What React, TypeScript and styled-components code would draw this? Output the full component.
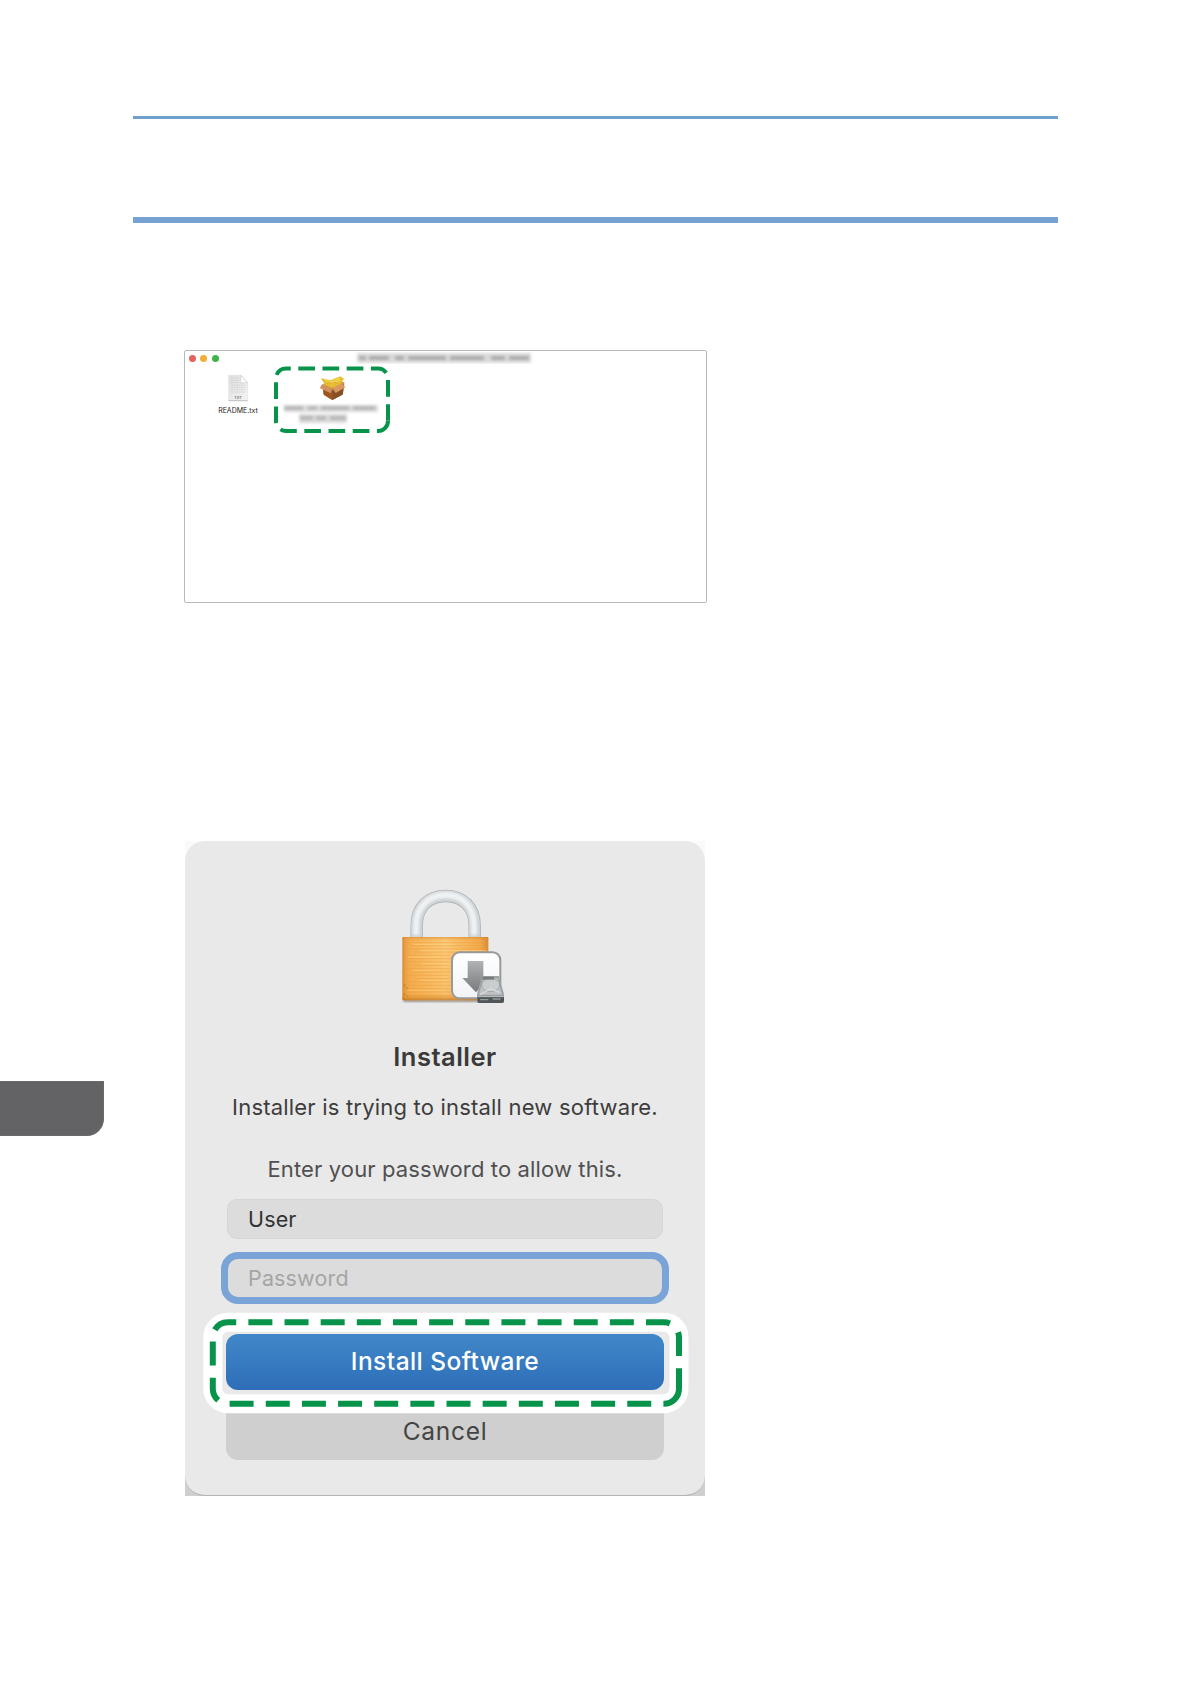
import React from "react"
import styled, { createGlobalStyle } from "styled-components"

const App: React.FC = () => {
	return (
		<Page>
			<GlobalStyle />
			<ThinRule />
			<ThickRule />
			<FinderWindow>
				<TitleBar>
					<Lights>
						<Light $color="#e2635c" />
						<Light $color="#f0ae35" />
						<Light $color="#3fb34b" />
					</Lights>
					<Smudge>
						<BlurredTitle />
					</Smudge>
				</TitleBar>
				<Files>
					<FileItem>
						<TextFileIcon />
						<FileName>README.txt</FileName>
					</FileItem>
					<PackageItem>
						<PackageIcon />
						<BlurredName />
					</PackageItem>
				</Files>
				<PackageHighlight />
			</FinderWindow>
			<Lower>
				<Gutter>
					<ChapterTab />
				</Gutter>
				<DialogFrame>
					<Dialog>
						<LockIcon />
						<Heading>Installer</Heading>
						<Message>Installer is trying to install new software.</Message>
						<Hint>Enter your password to allow this.</Hint>
						<Field>User</Field>
						<PasswordField>Password</PasswordField>
						<InstallButton>Install Software</InstallButton>
						<CancelButton>Cancel</CancelButton>
						<ButtonHighlight />
					</Dialog>
				</DialogFrame>
			</Lower>
		</Page>
	)
}

export default App

const TextFileIcon: React.FC = () => (
	<svg width="22" height="28" viewBox="0 0 66 84">
		<defs>
			<linearGradient id="paper" x1="0" y1="0" x2="1" y2="1">
				<stop offset="0" stopColor="#dedede" />
				<stop offset="1" stopColor="#f4f4f4" />
			</linearGradient>
		</defs>
		<path d="M5 4H42L62 26V80H5Z" fill="url(#paper)" stroke="#dcdcdc" strokeWidth="1.5" />
		<path d="M5 80H62" stroke="#b9b9b9" strokeWidth="2.5" />
		<path d="M42 4L39 27L62 26Z" fill="#fafafa" stroke="#bcbcbc" strokeWidth="1.5" />
		<path
			d="M12 12H34M12 19H34M12 26H34M12 33H54M12 40H54M12 47H54M12 54H54"
			stroke="#cacaca"
			strokeWidth="2"
			strokeDasharray="7 2 4 2"
		/>
		<text
			x="33"
			y="74"
			fontFamily="Inter, sans-serif"
			fontSize="12"
			fill="#444"
			textAnchor="middle"
		>
			TXT
		</text>
	</svg>
)

const PackageIcon: React.FC = () => (
	<svg width="28" height="26" viewBox="0 0 84 78">
		<path d="M10 28L42 40L74 28L72 58L40 75L13 58Z" fill="#a8672f" />
		<path d="M40 42L76 26L71 59L40 75Z" fill="#875024" />
		<path d="M14 42L40 52V75L15 60Z" fill="#9d5521" />
		<path d="M12 27L38 16L72 22L66 35L42 44Z" fill="#c99520" />
		<path d="M5 10L34 16L64 4L75 11L62 32L39 39L20 31Z" fill="#e6bd30" />
		<path d="M14 14L36 18L61 7L66 16L39 29Z" fill="#efd04c" />
		<path d="M25 26L32 22L37 27L46 22L54 25" fill="none" stroke="#cf9c1f" strokeWidth="2" />
		<path d="M9 28L40 40L35 55L2 39Z" fill="#d2925f" />
		<path d="M40 40L69 24L79 37L50 54Z" fill="#d89862" />
		<path d="M69 22L77 21L72 32Z" fill="#cb8850" />
	</svg>
)

const BlurredTitle: React.FC = () => (
	<svg width="180" height="16" viewBox="0 0 180 16">
		<g filter="url(#soft)">
			<rect x="3" y="3" width="174" height="10" fill="#dadada" />
			<path
				d="M5 8H12M15 8H35M41 8H50M54 8H92M96 8H130M137 8H151M155 8H175"
				stroke="#a9a9a9"
				strokeWidth="4"
			/>
		</g>
		<filter id="soft">
			<feGaussianBlur stdDeviation="1.4" />
		</filter>
	</svg>
)

const BlurredName: React.FC = () => (
	<svg width="102" height="24" viewBox="0 0 102 24">
		<g filter="url(#softer)">
			<rect x="5" y="4" width="94" height="7" fill="#dadada" />
			<rect x="20" y="13" width="48" height="9" fill="#dadada" />
			<path
				d="M5 7H24M29 7H38M42 7H70M74 7H96M21 17H34M37 17H47M51 17H67"
				stroke="#b2b2b2"
				strokeWidth="3.5"
			/>
		</g>
		<filter id="softer">
			<feGaussianBlur stdDeviation="1.5" />
		</filter>
	</svg>
)

const PackageHighlight: React.FC = () => (
	<Overlay $left={86} $top={12} width="122" height="74" viewBox="271 363 122 74">
		<path
			d="M388 421A10 10 0 0 1 378 431H286A10 10 0 0 1 276 421V378.500A10 10 0 0 1 286 368.500H378A10 10 0 0 1 388 378.500Z"
			fill="none"
			stroke="#07934a"
			strokeWidth="4"
			strokeDasharray="16.700 7.500"
		/>
	</Overlay>
)

const highlightPath =
	"M679 1388.700A15 15 0 0 1 664 1403.700H227.800A15 15 0 0 1 212.800 1388.700V1337.300A15 15 0 0 1 227.800 1322.300H664A15 15 0 0 1 679 1337.300Z"

const ButtonHighlight: React.FC = () => (
	<Overlay $left={15} $top={469} width="492" height="108" viewBox="200 1310 492 108">
		<path d={highlightPath} fill="none" stroke="#fff" strokeWidth="19" />
		<path
			d={highlightPath}
			fill="none"
			stroke="#07934a"
			strokeWidth="6"
			strokeDasharray="24 12.150"
		/>
	</Overlay>
)

const LockIcon: React.FC = () => (
	<svg width="150" height="135" viewBox="-60 0 450 405">
		<defs>
			<linearGradient id="brass" x1="0" y1="0" x2="1" y2="0">
				<stop offset="0" stopColor="#d58a35" />
				<stop offset="0.04" stopColor="#eda348" />
				<stop offset="0.1" stopColor="#f5b155" />
				<stop offset="0.5" stopColor="#fdcb7a" />
				<stop offset="0.9" stopColor="#f2aa4c" />
				<stop offset="1" stopColor="#d58a35" />
			</linearGradient>
			<linearGradient id="brassShade" x1="0" y1="0" x2="0" y2="1">
				<stop offset="0" stopColor="#c97920" stopOpacity="0.45" />
				<stop offset="0.07" stopColor="#f0a040" stopOpacity="0.05" />
				<stop offset="0.9" stopColor="#e88a1a" stopOpacity="0.15" />
				<stop offset="1" stopColor="#b56a18" stopOpacity="0.7" />
			</linearGradient>
			<linearGradient id="badge" x1="0" y1="0" x2="0" y2="1">
				<stop offset="0" stopColor="#ffffff" />
				<stop offset="1" stopColor="#f1f3f7" />
			</linearGradient>
			<linearGradient id="arrow" x1="0" y1="0" x2="0" y2="1">
				<stop offset="0" stopColor="#b0b2b4" />
				<stop offset="1" stopColor="#77797c" />
			</linearGradient>
			<filter id="shade">
				<feGaussianBlur stdDeviation="3" />
			</filter>
			<filter id="tube">
				<feGaussianBlur stdDeviation="5" />
			</filter>
		</defs>
		<rect x="40" y="356" width="250" height="10" fill="#9a958f" filter="url(#shade)" />
		<path
			d="M80 176V137C80 82 115 48 167 48S254 82 254 137V176"
			fill="none"
			stroke="#a9adb1"
			strokeWidth="37"
		/>
		<path
			d="M80 176V137C80 82 115 48 167 48S254 82 254 137V176"
			fill="none"
			stroke="#cbd0d3"
			strokeWidth="33"
		/>
		<path
			d="M78 166V136C78 82 115 45 167 45S252 82 252 136V166"
			fill="none"
			stroke="#f0f3f4"
			strokeWidth="19"
			filter="url(#tube)"
		/>
		<rect x="37" y="171" width="258" height="190" rx="4" fill="url(#brass)" />
		<path
			d="M48 188H285M60 197H270M42 207H289M70 216H240M44 226H180M58 236H182M42 246H178M70 256H180M45 266H180M60 276H181M42 286H176M72 296H180M48 306H179M64 316H181M44 326H178M56 336H182M46 346H182"
			stroke="#e89b3c"
			strokeWidth="2.5"
			strokeOpacity="0.55"
		/>
		<path
			d="M70 193H190M90 212H290M55 231H150M95 251H177M70 271H145M90 301H178M55 331H160"
			stroke="#ffd98b"
			strokeWidth="2"
		/>
		<rect x="37" y="171" width="258" height="190" rx="4" fill="url(#brassShade)" />
		<path d="M44 313V319M51 321V325M44 340V345M53 347V350" stroke="#9a621f" strokeWidth="2" />
		<rect
			x="186"
			y="217"
			width="145"
			height="138"
			rx="23"
			fill="url(#badge)"
			stroke="#98999b"
			strokeWidth="6"
		/>
		<path d="M233 243H280V294H298L258 337L217 294H233Z" fill="url(#arrow)" />
		<path d="M276 288H327L342 343V364Q342 369 337 369H266Q261 369 261 364V343Z" fill="#a5a8aa" />
		<path d="M278 293H325L338 346H265Z" fill="#bfc2c3" stroke="#8f9395" strokeWidth="2" />
		<ellipse cx="302" cy="315" rx="27" ry="20" fill="#c9cdce" stroke="#92979a" strokeWidth="2" />
		<path d="M277 290H312V299H277Z" fill="#777b7d" />
		<path d="M270 344L302 326L329 338" fill="none" stroke="#dadddd" strokeWidth="4" />
		<path d="M262 350H342V363Q342 369 336 369H268Q262 369 262 363Z" fill="#505557" />
		<path d="M270 359H295M308 357H332" stroke="#929b9b" strokeWidth="4" />
		<path d="M263 350H341" stroke="#d7dada" strokeWidth="2" />
	</svg>
)

const GlobalStyle = createGlobalStyle`
	body {
		margin: 0;
		background: #fff;
		font-family: Inter, "Liberation Sans", sans-serif;
	}
	* {
		box-sizing: border-box;
	}
	svg {
		display: block;
		flex-shrink: 0;
	}
`

const Page = styled.main`
	display: flex;
	flex-direction: column;
	width: 1191px;
	height: 1684px;
	padding-top: 116px;
	overflow: hidden;
`

const ThinRule = styled.div`
	flex-shrink: 0;
	height: 3px;
	margin: 0 133px;
	background: #719fce;
`

const ThickRule = styled(ThinRule)`
	height: 6px;
	margin-top: 98px;
	background: #76a2d3;
`

const FinderWindow = styled.section`
	position: relative;
	flex-shrink: 0;
	width: 523px;
	height: 253px;
	margin: 127px 0 0 184px;
	border: 1px solid #b9b9b9;
	border-radius: 2px;
`

const TitleBar = styled.div`
	display: flex;
	align-items: flex-start;
	height: 20px;
`

const Lights = styled.div`
	display: flex;
	gap: 4.500px;
	width: 169px;
	padding: 4px 0 0 3.500px;
`

const Light = styled.span<{ $color: string }>`
	width: 7px;
	height: 7px;
	border-radius: 50%;
	background: ${({ $color }) => $color};
`

const Smudge = styled.div`
	margin-top: -1.500px;
`

const Files = styled.div`
	display: flex;
	padding-left: 23px;
`

const FileItem = styled.div`
	display: flex;
	flex-direction: column;
	align-items: center;
	width: 60px;
	padding-top: 3px;
`

const PackageItem = styled(FileItem)`
	width: 102px;
	margin-left: 11px;
	padding-top: 4px;

	> svg:first-child {
		margin-left: 6px;
	}
`

const FileName = styled.span`
	margin-top: 4px;
	font-size: 7px;
	line-height: 10px;
	color: #222;
`

const Overlay = styled.svg<{ $left: number; $top: number }>`
	position: absolute;
	left: ${({ $left }) => $left}px;
	top: ${({ $top }) => $top}px;
	pointer-events: none;
`

const Lower = styled.div`
	display: flex;
	margin-top: 238px;
`

const Gutter = styled.aside`
	width: 185px;
	padding-top: 240px;
`

const ChapterTab = styled.div`
	width: 104px;
	height: 55px;
	border: 1px solid #6a6a6c;
	border-left: 0;
	border-radius: 0 0 17px 0;
	background: #636365;
`

const DialogFrame = styled.div`
	width: 520px;
	height: 655px;
	background: linear-gradient(#fafafa 50%, #cfcfcf 50%);
`

const Dialog = styled.section`
	position: relative;
	display: flex;
	flex-direction: column;
	align-items: center;
	height: 655px;
	padding-top: 39px;
	border-bottom: 1px solid #b4b4b4;
	border-radius: 20px;
	background: #e9e9e9;
`

const Heading = styled.h1`
	margin: 26px 0 0;
	font-size: 25.500px;
	font-weight: 600;
	line-height: 32px;
	letter-spacing: 0.500px;
	color: #3a3a3a;
`

const Message = styled.p`
	margin: 19px 0 0;
	font-size: 22px;
	line-height: 30px;
	letter-spacing: 0.200px;
	white-space: nowrap;
	color: #3d3d3d;
`

const Hint = styled(Message)`
	margin-top: 32px;
	letter-spacing: 0.130px;
	color: #505050;
`

const Field = styled.div`
	flex-shrink: 0;
	width: 436px;
	height: 40px;
	margin-top: 15px;
	padding-left: 20px;
	border: 1px solid #d5d5d5;
	border-radius: 10px;
	background: #dcdcdc;
	font-size: 21.500px;
	line-height: 38px;
	letter-spacing: 0.150px;
	color: #333;
`

const PasswordField = styled(Field)`
	width: 448px;
	height: 52px;
	margin-top: 13px;
	border: 7px solid #7aa3d8;
	border-radius: 17px;
	color: #a5a5a5;
`

const InstallButton = styled.button`
	flex-shrink: 0;
	width: 438px;
	height: 56px;
	margin-top: 30px;
	padding: 0 0 2px;
	border: 0;
	border-radius: 12px;
	background: linear-gradient(#4088c9, #2e6eb8);
	font-family: inherit;
	font-size: 24.500px;
	font-weight: 500;
	letter-spacing: 0.450px;
	color: #fff;
`

const CancelButton = styled(InstallButton)`
	margin-top: 14px;
	background: #cfcfcf;
	font-weight: 400;
	letter-spacing: 0.700px;
	color: #444;
`
